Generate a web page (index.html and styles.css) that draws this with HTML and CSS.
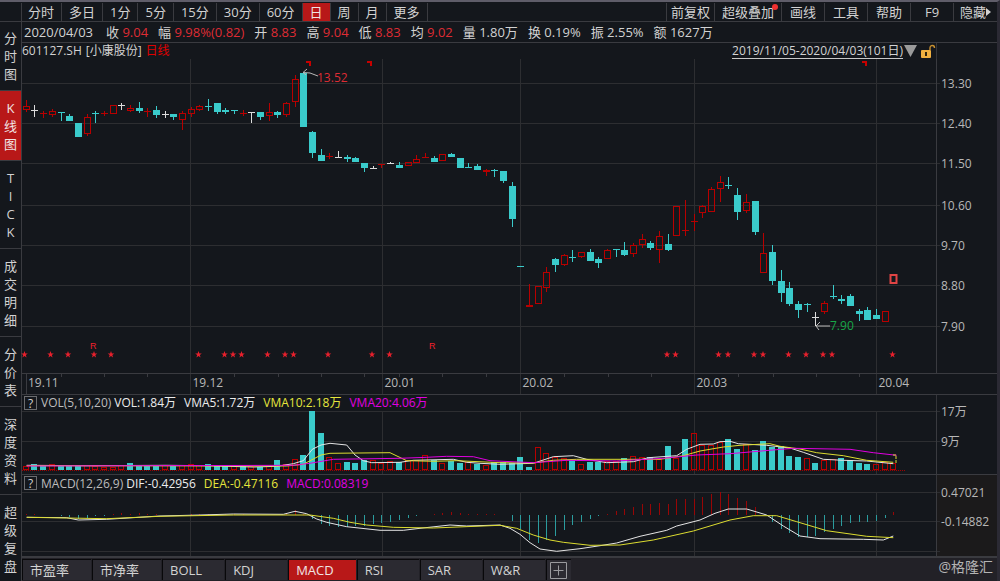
FILE: index.html
```html
<!DOCTYPE html>
<html lang="zh-CN">
<head>
<meta charset="utf-8">
<title>601127.SH 日线</title>
<link rel="stylesheet" href="styles.css">
</head>
<body>
<div class="app">
  <header class="toolbar">
    <nav class="periods" aria-label="周期">
      <button>分时</button><button>多日</button><button>1分</button><button>5分</button><button>15分</button><button>30分</button><button>60分</button><button class="active">日</button><button>周</button><button>月</button><button>更多</button>
    </nav>
    <div class="tools">
      <button class="snug">前复权</button><button class="badged">超级叠加<i class="dot"></i></button><button>画线</button><button>工具</button><button>帮助</button><button>F9</button><button class="snug">隐藏<svg class="caret" viewBox="0 0 5 8"><path d="M0 0L5 4L0 8Z"/></svg></button>
    </div>
  </header>
  <div class="body">
    <nav class="side" aria-label="视图">
      <button>分<br>时<br>图</button>
      <button class="active">K<br>线<br>图</button>
      <button>T<br>I<br>C<br>K</button>
      <button>成<br>交<br>明<br>细</button>
      <button>分<br>价<br>表</button>
      <button>深<br>度<br>资<br>料</button>
      <button>超<br>级<br>复<br>盘</button>
    </nav>
    <main class="content">
      <div class="quote">
        <span class="date">2020/04/03</span>
        <span>收 <b>9.04</b></span>
        <span>幅 <b>9.98%(0.82)</b></span>
        <span>开 <b>8.83</b></span>
        <span>高 <b>9.04</b></span>
        <span>低 <b>8.83</b></span>
        <span>均 <b>9.02</b></span>
        <span>量 1.80万</span>
        <span>换 0.19%</span>
        <span>振 2.55%</span>
        <span>额 1627万</span>
      </div>
      <section class="panel">
        <div class="legend">
          <div class="legend-main title">
            <span>601127.SH</span><span>[小康股份]</span><span class="kind">日线</span>
            <a class="range" href="#">2019/11/05-2020/04/03(101日)</a>
            <button class="icon" aria-label="选择区间"><svg width="13" height="12" viewBox="0 0 13 12"><path d="M0 0H13L6.500 12Z" fill="#9a9a9a"/></svg></button>
            <button class="icon" aria-label="锁定"><svg width="16" height="15" viewBox="0 0 16 15"><rect x="1" y="6" width="10" height="8" rx="1" fill="#f0b040"/><path d="M10 6V4Q10 1.500 12.500 1.500Q14.500 1.500 14.500 4" fill="none" stroke="#c89030" stroke-width="1.400"/><path d="M5 8H7V12H5Z" fill="#30240c"/></svg></button>
          </div>
          <div class="legend-axis"></div>
        </div>
        <svg id="price" class="chart" viewBox="22 59 975 336" role="img" aria-label="日K线"></svg>
      </section>
      <section class="panel">
        <div class="legend">
          <div class="legend-main">
            <button class="help">?</button><span class="name">VOL(5,10,20)</span><span class="c-white">VOL:1.84万</span><span class="c-white">VMA5:1.72万</span><span class="c-yellow">VMA10:2.18万</span><span class="c-magenta">VMA20:4.06万</span>
          </div>
          <div class="legend-axis"></div>
        </div>
        <svg id="volume" class="chart" viewBox="22 411 975 64" role="img" aria-label="成交量"></svg>
      </section>
      <section class="panel">
        <div class="legend tall">
          <div class="legend-main">
            <button class="help">?</button><span class="name">MACD(12,26,9)</span><span class="c-white">DIF:-0.42956</span><span class="c-yellow">DEA:-0.47116</span><span class="c-magenta">MACD:0.08319</span>
          </div>
          <div class="legend-axis warm"></div>
        </div>
        <svg id="macd" class="chart" viewBox="22 492 975 65" role="img" aria-label="MACD"></svg>
      </section>
      <footer class="tabs">
        <button>市盈率</button><button>市净率</button><button>BOLL</button><button>KDJ</button><button class="active">MACD</button><button>RSI</button><button>SAR</button><button>W&amp;R</button>
        <button class="add" aria-label="添加指标"><svg width="17" height="17" viewBox="0 0 17 17"><path d="M.5 .5H16.500V16.500H.5ZM8.500 3.500V13.500M3.500 8.500H13.500" fill="none" stroke="#9a9a9e"/></svg></button>
        <span class="mark">@格隆汇</span>
      </footer>
    </main>
  </div>
</div>
<script src="app.js"></script>
</body>
</html>
```
FILE: styles.css
```css
* { box-sizing: border-box; }

body {
  margin: 0;
  background: #14171c;
  color: #d2d2d2;
  font: 13px/18px "Open Sans", "Noto Sans CJK SC", sans-serif;
}

button {
  margin: 0;
  padding: 0;
  border: 0;
  background: none;
  color: inherit;
  font: inherit;
  cursor: pointer;
}

.app {
  display: flex;
  flex-direction: column;
  height: 100vh;
  min-height: 581px;
  padding-top: 1px;
  overflow: hidden;
  border-top: 2px solid #5f5d69;
  border-right: 3px solid #2b2a34;
}

.toolbar {
  display: flex;
  flex: none;
  justify-content: space-between;
  height: 19px;
  padding-left: 21px;
  border-bottom: 1px solid #3a3b40;
}

.periods, .tools { display: flex; }
.periods { border-left: 1px solid #3a3b40; }

.toolbar button {
  display: flex;
  align-items: center;
  justify-content: center;
  height: 18px;
  padding: 0 7px;
  border-right: 1px solid #3a3b40;
  white-space: nowrap;
}

.periods button:first-child { padding-left: 6px; }

.tools button {
  min-width: 43px;
  border-right: 0;
  border-left: 1px solid #3a3b40;
}

.tools button:last-child { min-width: 44px; }
.tools .snug { padding: 0 4px; }
.badged { position: relative; }

.dot {
  position: absolute;
  top: 1px;
  right: 3px;
  width: 6px;
  height: 6px;
  border-radius: 50%;
  background: #f03030;
}

.caret {
  width: 5px;
  height: 8px;
  fill: #d2d2d2;
}

.toolbar .active, .side .active { background: #b81818; color: #f0e4e4; }

.body {
  display: flex;
  flex: 1;
  min-height: 0;
}

.side {
  display: flex;
  flex: none;
  flex-direction: column;
  width: 22px;
  overflow: hidden;
  border-right: 1px solid #3a3b40;
}

.side button {
  flex: none;
  padding: 8px 0 7px;
  border-bottom: 1px solid #3a3b40;
}

.side button:first-child { padding-top: 7px; }

.content {
  display: flex;
  flex: 1;
  flex-direction: column;
  min-width: 0;
}

.quote {
  display: flex;
  flex: none;
  gap: 10px;
  height: 21px;
  padding: 1px 0 0 2px;
  border-bottom: 1px solid #3a3b40;
  white-space: nowrap;
}

.date { margin-right: 3px; }
.quote b { color: #de2c34; font-weight: 400; }

.legend {
  display: flex;
  height: 16px;
  font-size: 12px;
  line-height: 16px;
}

.tall { height: 17px; line-height: 18px; }

.legend-main {
  display: flex;
  flex: 1;
  gap: 8px;
  padding-left: 2px;
  border-right: 1px solid #34353a;
  white-space: nowrap;
}

.legend-axis { flex: none; width: 60px; }
.warm { background: #1b1a1b; }

.legend .title { gap: 4px; padding-left: 0; }
.kind { color: #e00000; }

.range {
  margin-left: auto;
  border-bottom: 1px solid #c8c8c8;
  color: inherit;
  line-height: 16px;
  text-decoration: none;
}

.icon { display: flex; align-items: center; }
.title .icon { margin-left: -3px; }
.title .icon:last-child { margin-left: -1px; }

.help {
  width: 13px;
  height: 14px;
  margin: 1px -4px 0 0;
  border: 1px solid #6c6d70;
  line-height: 11px;
}

.name { margin-right: -5px; color: #bcbcbc; }
.c-white { color: #ececec; }
.c-yellow { color: #e6e63c; }
.c-magenta { color: #e000e0; }

.chart {
  display: block;
  width: 100%;
  height: auto;
  overflow: visible;
}

.chart text { fill: #b8b8b8; font-size: 12px; }
.chart .high { fill: #de2c34; }
.chart .low { fill: #18a848; }
.chart .event { fill: #f0202c; font-family: "Liberation Sans", sans-serif; font-size: 9px; }

.grid { stroke: #2d2e31; shape-rendering: crispEdges; }
.frame { stroke: #3a3b40; shape-rendering: crispEdges; }
.up { fill: none; stroke: #b80000; shape-rendering: crispEdges; }
.down { fill: #3acbcb; stroke: #3acbcb; shape-rendering: crispEdges; }
.flat { fill: none; stroke: #dcdcdc; shape-rendering: crispEdges; }
.hist-up { stroke: #980606; }
.hist-down { stroke: #2b9c9e; }
.last { fill: none; stroke: #e04444; stroke-width: 2; }
.star { fill: #e8202c; }
.flag { fill: none; stroke: #c80000; stroke-width: 2; }
.arrow { fill: none; stroke: #b8b8b8; }
.base { stroke: #a00000; stroke-dasharray: 1 1; }
.scale { fill: #1b1a1b; }

.curve { fill: none; stroke-width: 1; }
.white { stroke: #e4e4e4; }
.yellow { stroke: #dcdc30; }
.magenta { stroke: #e000e0; }

.tabs {
  display: flex;
  flex: 1 0 24px;
  gap: 1px;
  padding: 1px 4px 1px 0;
  border-top: 1px solid #3a3b40;
  background: #222127;
}

.tabs button {
  min-width: 62px;
  padding: 0 22px 0 7px;
  border: 1px solid #08080a;
  border-width: 1px 0 0 1px;
  background: #2b2a31;
  text-align: left;
  line-height: 20px;
}

.tabs .active { background: #b81818; color: #f0e4e4; }

.tabs .add {
  display: flex;
  align-items: center;
  justify-content: center;
  min-width: 25px;
  padding: 0;
}

.mark {
  margin-left: auto;
  color: #b4b4b4;
  font-size: 14px;
  line-height: 16px;
}
```
FILE: app.js
```js
const NS = "http://www.w3.org/2000/svg";

function add(parent, tag, attrs, text) {
  const node = document.createElementNS(NS, tag);
  for (const key in attrs) node.setAttribute(key, attrs[key]);
  if (text) node.textContent = text;
  parent.appendChild(node);
  return node;
}

const line = (svg, x1, y1, x2, y2, cls) =>
  add(svg, "path", { d: `M${x1} ${y1}L${x2} ${y2}`, class: cls });
const label = (svg, x, y, text, cls) =>
  add(svg, "text", { x, y, class: cls || "" }, text);
const barX = i => Math.floor(26.3 + i * 8.675) + 0.5;
const snap = v => Math.floor(v) + 0.5;

const LEFT = 22, AXIS = 936.5, RIGHT = 997;
const months = [[190.5, "19.12"], [382.5, "20.01"], [520.5, "20.02"], [694.5, "20.03"], [876.5, "20.04"]];

/* kind, body top, body bottom, high, low */
const candles = [
  "u 106 109 100 111", "w 110 110 105 116", "u 113 113 111 117", "u 111 114 109 116", "d 112 112 112 120",
  "d 116 120 114 120", "d 123 136 123 136", "u 117 133 114 135", "d 113 113 111 122", "u 113 113 111 115",
  "u 105 113 105 113", "w 105 105 103 109", "u 108 110 105 111", "d 108 110 102 112", "u 111 111 108 116",
  "d 110 114 106 117", "w 114 114 111 117", "d 114 116 114 119", "u 113 119 111 129", "u 109 113 107 116",
  "u 106 109 105 110", "d 106 106 99 110", "d 103 111 103 113", "d 110 111 108 113", "d 110 110 110 113",
  "u 113 113 110 115", "w 112 112 112 122", "d 112 116 112 119", "u 112 115 103 120", "d 112 114 111 117",
  "u 103 114 102 116", "u 79 101 75 106", "d 73 126 73 126", "d 132 152 131 157", "d 155 160 149 160",
  "u 156 156 153 158", "w 157 157 151 157", "d 157 158 155 161", "d 158 161 157 161", "d 163 167 163 171",
  "w 168 168 166 168", "u 164 164 164 167", "w 163 163 162 163", "d 165 167 162 167", "u 162 165 162 165",
  "u 159 162 155 162", "u 157 157 153 157", "d 158 161 156 161", "u 154 160 154 160", "d 154 156 153 156",
  "d 158 167 158 167", "d 167 167 163 167", "d 166 169 164 169", "u 170 171 169 175", "d 170 170 169 176",
  "d 171 180 171 182", "d 186 218 182 226", "d 266 266 266 266", "u 305 306 284 306", "u 286 303 286 303",
  "u 272 287 267 291", "d 259 264 258 271", "u 255 264 254 265", "d 257 257 250 261", "u 252 256 252 257",
  "d 252 260 249 260", "d 259 262 257 267", "u 250 258 249 258", "d 249 249 249 256", "d 250 254 242 255",
  "u 245 253 243 256", "u 239 244 234 247", "d 243 247 241 249", "u 236 249 231 262", "d 244 249 234 250",
  "u 206 235 206 235", "u 230 230 200 235", "u 221 221 214 230", "u 206 212 205 217", "u 189 211 187 211",
  "u 182 188 176 201", "d 185 185 177 188", "d 195 211 188 219", "u 202 210 194 212", "d 201 231 201 234",
  "u 253 272 233 272", "d 252 280 245 284", "d 281 292 270 301", "d 288 303 282 305", "d 304 309 301 317",
  "d 304 304 303 311", "w 317 317 312 325", "u 303 311 301 313", "d 296 296 285 298", "d 299 300 295 303",
  "d 296 305 294 305", "d 311 313 309 320", "d 310 319 307 319", "d 315 318 309 318", "u 311 321 311 321"
];

function drawPrice() {
  const svg = document.getElementById("price");
  const rows = [[83, "13.30"], [123, "12.40"], [163, "11.50"], [205, "10.60"], [245, "9.70"], [285, "8.80"], [326, "7.90"]];
  for (const [y, text] of rows) {
    line(svg, LEFT, y + 0.5, 940, y + 0.5, "grid");
    label(svg, 941, y + 5, text);
  }
  for (const [x, text] of months) {
    line(svg, x, 59, x, 394, "grid");
    label(svg, x + 2, 387, text);
  }
  line(svg, 26.5, 374, 26.5, 394, "frame");
  label(svg, 28, 387, "19.11");
  line(svg, AXIS, 59, AXIS, 374, "frame");
  line(svg, LEFT, 373.5, RIGHT, 373.5, "frame");
  line(svg, LEFT, 394.5, RIGHT, 394.5, "frame");
  for (const x of [61, 104, 147, 234, 278, 321, 364, 399, 442, 486, 564, 608, 651, 738, 773, 816, 859])
    line(svg, x + 0.5, 374, x + 0.5, 377, "frame");

  candles.forEach((row, i) => {
    const [kind, ...values] = row.split(" ");
    const [top, bottom, high, low] = values.map(v => +v + 0.5);
    const x = barX(i);
    const cls = { u: "up", d: "down", w: "flat" }[kind];
    let d = top === bottom ? `M${x - 3.5} ${top}H${x + 3.5}` : `M${x - 3} ${top}H${x + 3}V${bottom}H${x - 3}Z`;
    if (high < top) d += `M${x} ${high - 0.5}V${top}`;
    if (low > bottom) d += `M${x} ${bottom}V${low + 0.5}`;
    add(svg, "path", { d, class: cls });
  });
  add(svg, "rect", { x: 890.5, y: 275, width: 6, height: 8, class: "last" });

  const stars = [24.5, 50.5, 68, 94, 111, 198.5, 224.5, 233, 241.5, 267.5, 285, 293.5, 328, 372, 389.5,
    667, 675.5, 718.5, 728, 754, 763, 788.5, 806, 823, 832, 892.5];
  for (const x of stars)
    add(svg, "path", { d: `M${x} 351l.9 2.500h2.400l-2 1.500.8 2.500-2.100-1.500-2.100 1.500.8-2.500-2-1.500h2.400z`, class: "star" });
  label(svg, 90, 349, "R", "event");
  label(svg, 429, 349, "R", "event");
  for (const x of [306, 367, 862])
    add(svg, "path", { d: `M${x} 62H${x + 4}V66`, class: "flag" });

  add(svg, "path", { d: "M303 72.500L310 73L318 76M307 69L303 72.500L306 75", class: "arrow" });
  label(svg, 317, 82, "13.52", "high");
  add(svg, "path", { d: "M830 326H816M820 322L816 326L819 330", class: "arrow" });
  label(svg, 830, 330, "7.90", "low");
}

/* Indicator curves are stored on a grid three times finer than the chart. */
function curve(svg, points, cls) {
  const pts = points.trim().split(" ").map(p => {
    const [x, y] = p.split(",");
    return `${(x / 3).toFixed(1)},${(395 + y / 3).toFixed(1)}`;
  });
  add(svg, "polyline", { points: pts.join(" "), class: "curve " + cls });
}

function subGrid(svg, rows, top, bottom) {
  for (const y of rows) line(svg, LEFT, y, 940, y, "grid");
  for (const [x] of months) line(svg, x, top, x, bottom, "grid");
  line(svg, AXIS, top - 1, AXIS, bottom, "frame");
  line(svg, LEFT, bottom - 0.5, RIGHT, bottom - 0.5, "frame");
}

const volumes = ("u213 d207 d212 u208 d210 d210 d212 u211 u215 u217 u217 u211 d204 d211 d211 d215 u211 d213 u211 u207 " +
  "u212 d207 d212 d211 u215 d213 u215 d216 u213 d195 u208 u193 d180 d48 d114 u187 u205 d201 d204 d197 " +
  "u197 u205 u200 d201 u195 u195 u181 d195 u205 d198 d204 u202 d208 u211 d203 d203 d205 d186 d217 u157 " +
  "u175 u187 u190 d195 u207 d203 d202 u200 u200 d189 u183 u187 d186 u193 d154 u190 d132 u115 u150 u150 " +
  "u142 d132 d163 u147 d165 d140 d158 d153 d183 d186 u190 d206 u196 u193 d189 d197 d206 d207 u208 u203 u204").split(" ");

function drawVolume() {
  const svg = document.getElementById("volume");
  subGrid(svg, [411.5, 441.5], 411, 475);
  label(svg, 941, 416, "17万");
  label(svg, 941, 446, "9万");
  volumes.forEach((v, i) => {
    const y = snap(395 + v.slice(1) / 3);
    add(svg, "rect", { x: barX(i) - 3, y, width: 5, height: 469.5 - y, class: v[0] === "u" ? "up" : "down" });
  });
  line(svg, LEFT, 470.5, 906, 470.5, "base");
  curve(svg, "80,211 260,212 500,211 620,212 760,216 830,214 880,206 910,197 937,163 963,150 990,145 1040,150 1065,180 1090,197 1115,203 1200,202 1240,196 1360,193 1400,202 1440,205 1500,208 1600,205 1630,195 1660,185 1720,182 1760,193 1820,203 1900,200 1945,188 2030,182 2060,163 2100,148 2140,147 2160,140 2190,139 2215,146 2300,151 2370,159 2410,172 2470,193 2530,196 2600,198 2680,206", "white");
  curve(svg, "80,212 860,213 910,208 963,180 990,175 1170,173 1220,197 1300,199 1370,197 1500,203 1600,204 1660,196 1730,193 1980,193 2050,182 2100,168 2170,156 2220,151 2310,146 2340,154 2400,162 2450,173 2530,182 2600,196 2680,202", "yellow");
  curve(svg, "80,213 880,211 930,205 1000,193 1200,190 1280,187 1340,184 1420,185 1470,197 1600,203 1700,196 1850,198 1990,190 2090,180 2190,176 2260,170 2330,164 2380,160 2550,163 2620,173 2690,181", "magenta");
  add(svg, "path", { d: "M893 455H896V463", class: "curve yellow", "stroke-dasharray": "3 1" });
}

/* End of each histogram bar by day; 360 is the zero level. */
const histogram = [357, 358, 360, 360, 363, 367, 372, 370, 364, 362, 356, 353, 356, 354, 356, 358, 360, 360, 360, 358,
  358, 357, 357, 358, 358, 357, 360, 360, 360, 360, 357, 346, 356, 373, 388, 392, 396, 396, 393, 393,
  388, 384, 380, 376, 370, 364, 360, 358, 355, 351, 353, 356, 357, 358, 357, 360, 377, 403, 434, 443,
  435, 423, 404, 390, 380, 371, 364, 356, 348, 342, 336, 328, 327, 324, 327, 312, 312, 312, 307, 298,
  292, 296, 310, 319, 336, 360, 381, 403, 415, 425, 425, 424, 412, 401, 392, 384, 381, 381, 377, 368, 351];

function drawMacd() {
  const svg = document.getElementById("macd");
  add(svg, "rect", { x: 937, y: 492, width: 60, height: 64, class: "scale" });
  subGrid(svg, [492.5, 521.5, 551.5], 492, 557);
  label(svg, 941, 497, "0.47021");
  label(svg, 941, 526, "-0.14882");
  histogram.forEach((end, i) => {
    if (end !== 360)
      line(svg, barX(i), 515, barX(i), 395 + Math.round(end / 3), end < 360 ? "hist-up" : "hist-down");
  });
  curve(svg, "80,367 200,368 235,375 320,373 480,363 600,360 700,357 850,358 885,349 920,356 950,372 980,382 1040,395 1140,406 1210,406 1260,400 1350,390 1400,393 1500,390 1530,400 1560,418 1590,443 1620,462 1670,469 1740,461 1800,452 1850,444 1920,424 2000,406 2030,393 2100,375 2145,355 2185,342 2240,342 2300,360 2350,393 2400,423 2460,431 2590,433 2650,435 2680,423", "white");
  curve(svg, "80,367 320,371 480,364 700,360 930,360 1000,370 1050,382 1100,390 1180,397 1300,399 1500,391 1550,400 1600,420 1650,435 1690,442 1770,451 1860,450 1960,435 2080,408 2190,375 2260,362 2330,362 2390,380 2480,407 2600,424 2680,428", "yellow");
}

drawPrice();
drawVolume();
drawMacd();
```
